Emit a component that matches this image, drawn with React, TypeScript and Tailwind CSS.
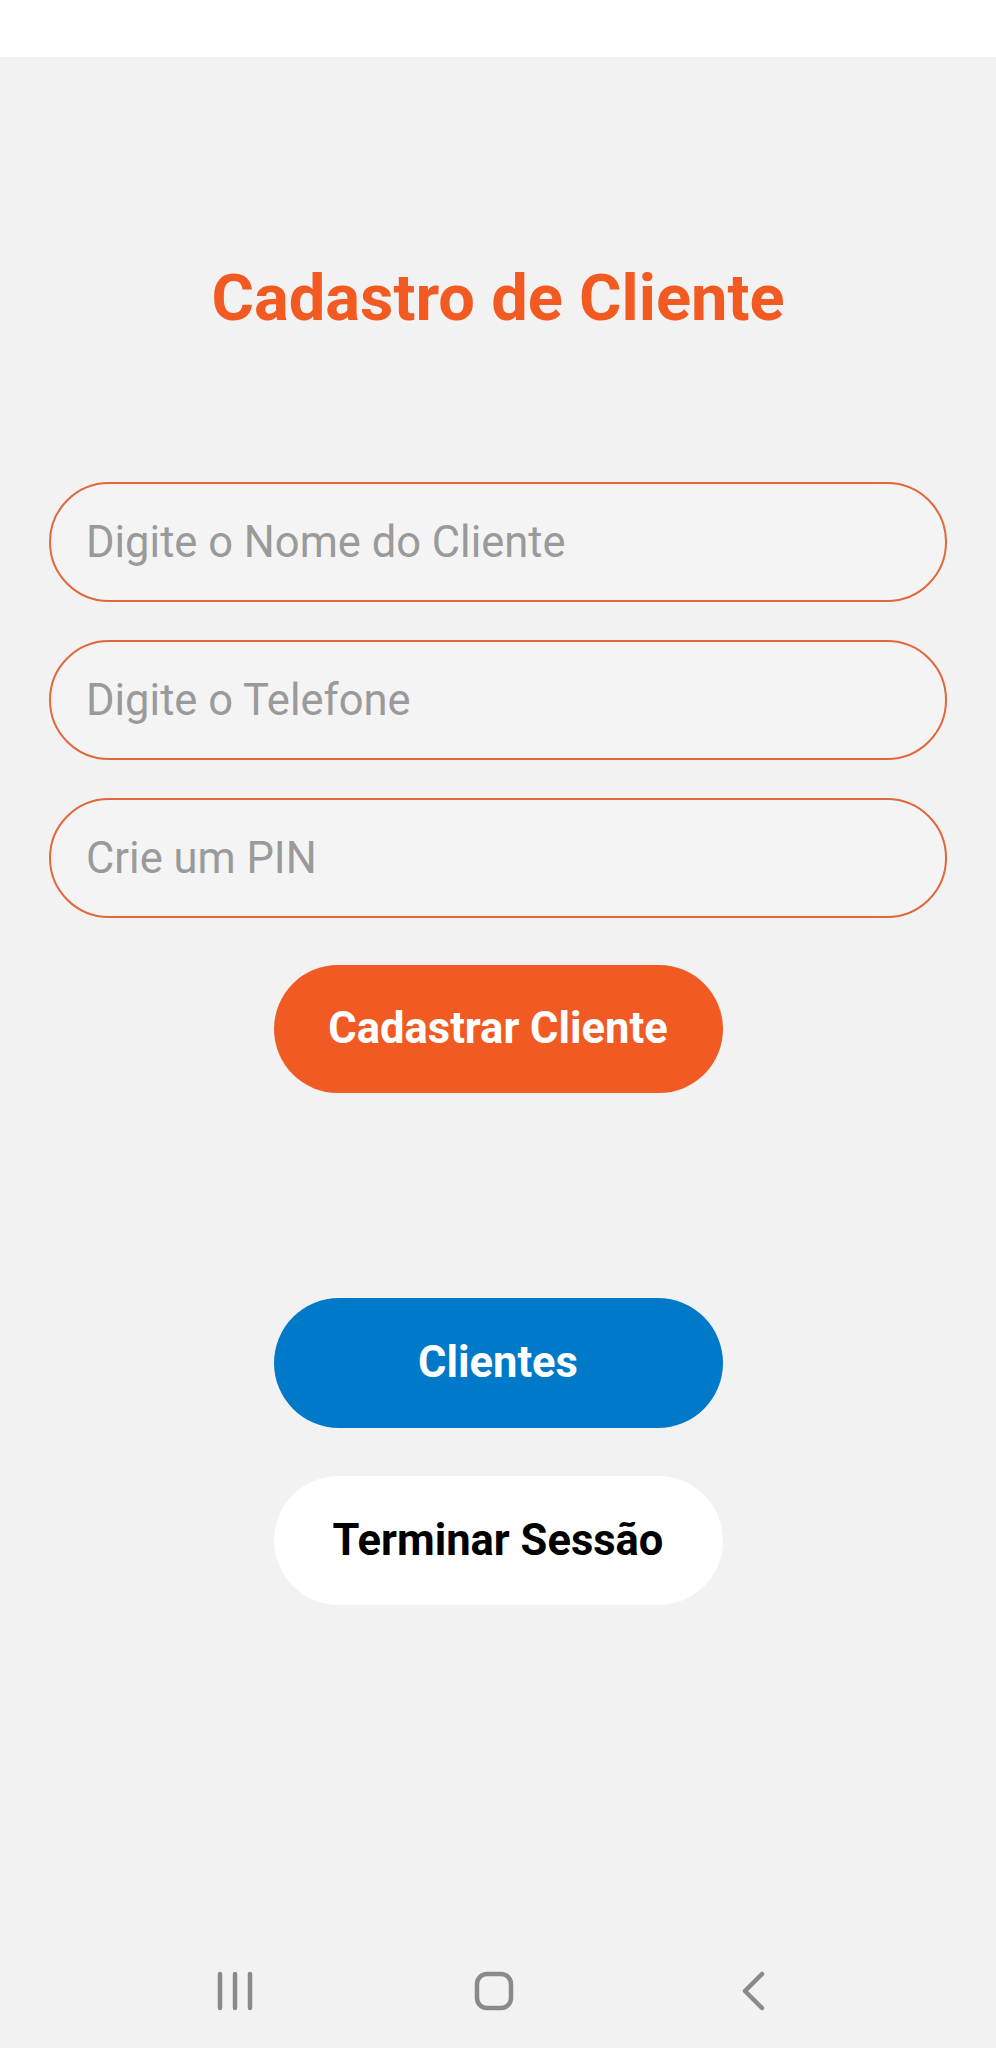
import React from "react";

const FONT = { fontFamily: "Roboto, 'Noto Sans', Arial, sans-serif" };

function Field({ placeholder }: { placeholder: string }) {
  return (
    <input
      type="text"
      placeholder={placeholder}
      className="h-[120px] w-full rounded-full border-2 border-[#e2673d] bg-[#f4f4f4] pl-[35px] text-[43.5px] text-[#333] outline-none placeholder:text-[#9a9a9a]"
      style={FONT}
    />
  );
}

function NavBar() {
  return (
    <div className="flex h-[114px] items-center justify-center pr-[8px]">
      <div className="flex w-[259px] justify-center">
        <svg width="40" height="40" viewBox="0 0 40 40">
          <g stroke="#8a8a8a" strokeWidth="4.5" strokeLinecap="round">
            <line x1="5" y1="3" x2="5" y2="37" />
            <line x1="20" y1="3" x2="20" y2="37" />
            <line x1="35" y1="3" x2="35" y2="37" />
          </g>
        </svg>
      </div>
      <div className="flex w-[259px] justify-center">
        <svg width="40" height="40" viewBox="0 0 40 40">
          <rect x="3" y="3" width="34" height="34" rx="10" fill="none" stroke="#8a8a8a" strokeWidth="4.5" />
        </svg>
      </div>
      <div className="flex w-[259px] justify-center">
        <svg width="40" height="40" viewBox="0 0 40 40">
          <polyline points="29,3 12,20 29,37" fill="none" stroke="#8a8a8a" strokeWidth="4.5" strokeLinecap="round" strokeLinejoin="round" />
        </svg>
      </div>
    </div>
  );
}

export default function App() {
  return (
    <div className="flex h-[2048px] w-full flex-col bg-[#f2f2f2]" style={FONT}>
      <div className="h-[57px] bg-white" />
      <main className="flex flex-1 flex-col">
        <h1 className="mt-[209px] text-center text-[65px] font-bold leading-none text-[#f25a22]">
          Cadastro de Cliente
        </h1>

        <div className="mt-[151px] flex flex-col gap-[38px] px-[49px]">
          <Field placeholder="Digite o Nome do Cliente" />
          <Field placeholder="Digite o Telefone" />
          <Field placeholder="Crie um PIN" />
        </div>

        <div className="mt-[47px] flex flex-col items-center">
          <button className="h-[128px] w-[449px] rounded-full bg-[#f25a24] text-[43.5px] font-bold text-white">
            Cadastrar Cliente
          </button>
          <button className="mt-[205px] h-[130px] w-[449px] rounded-full bg-[#0079c9] text-[43.5px] font-bold text-white">
            Clientes
          </button>
          <button className="mt-[48px] h-[129px] w-[449px] rounded-full bg-white text-[43.5px] font-bold text-black">
            Terminar Sessão
          </button>
        </div>
      </main>
      <NavBar />
    </div>
  );
}
